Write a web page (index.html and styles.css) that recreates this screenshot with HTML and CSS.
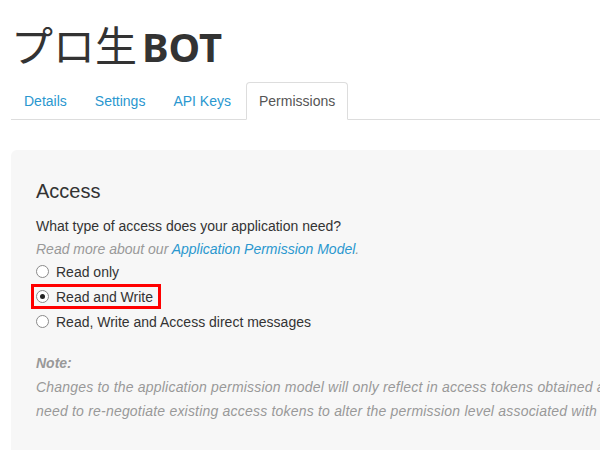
FILE: index.html
```html
<!DOCTYPE html>
<html>
<head>
<meta charset="utf-8">
<link rel="stylesheet" href="styles.css">
</head>
<body>
<div class="page">
  <h1 class="title">プロ生<span class="title-bold">BOT</span></h1>
  <ul class="tabs">
    <li class="tab"><a href="#">Details</a></li>
    <li class="tab"><a href="#">Settings</a></li>
    <li class="tab"><a href="#">API Keys</a></li>
    <li class="tab active"><a href="#">Permissions</a></li>
  </ul>
  <div class="panel">
    <h2 class="heading">Access</h2>
    <p class="question">What type of access does your application need?</p>
    <p class="hint">Read more about our <a href="#">Application Permission Model</a>.</p>
    <label class="option"><input type="radio" name="access"> Read only</label>
    <label class="option selected"><input type="radio" name="access" checked> Read and Write</label>
    <label class="option"><input type="radio" name="access"> Read, Write and Access direct messages</label>
    <p class="note-title">Note:</p>
    <p class="note">Changes to the application permission model will only reflect in access tokens obtained after the permission model change is saved. You will<br>need to re-negotiate existing access tokens to alter the permission level associated with each of your application's users.</p>
  </div>
</div>
</body>
</html>
```
FILE: styles.css
```css
html, body {
  margin: 0;
  padding: 0;
  background: #fff;
  overflow: hidden;
}
body {
  font-family: "Liberation Sans", Arial, sans-serif;
  font-size: 14px;
  line-height: 20px;
  color: #333;
}
.page {
  padding-left: 11px;
  width: 700px;
}
.title {
  margin: 0;
  padding-top: 22px;
  height: 60px;
  box-sizing: border-box;
  font-family: "Noto Sans CJK JP", "Liberation Sans", sans-serif;
  font-weight: 400;
  font-size: 42px;
  line-height: 44px;
  color: #333;
  white-space: nowrap;
}
.title-bold {
  font-family: "Noto Sans", "Liberation Sans", sans-serif;
  font-weight: 700;
  font-size: 40px;
  margin-left: 5px;
}
.tabs {
  list-style: none;
  margin: 22px 0 0 0;
  padding: 0;
  display: flex;
  border-bottom: 1px solid #ddd;
}
.tab {
  margin-right: 2px;
  margin-bottom: -1px;
}
.tab a {
  display: block;
  padding: 8px 12px;
  border: 1px solid transparent;
  border-radius: 4px 4px 0 0;
  color: #2a97cf;
  text-decoration: none;
}
.tab.active a {
  color: #555;
  background: #fff;
  border-color: #ddd #ddd #fff;
}
.panel {
  margin-top: 30px;
  background: #f7f7f7;
  border-radius: 6px 0 0 0;
  padding: 29px 25px 40px;
  height: 300px;
}
.heading {
  margin: 0 0 11px;
  font-size: 20px;
  font-weight: 400;
  line-height: 24px;
  color: #333;
}
.question {
  margin: 0;
  line-height: 25px;
}
.hint {
  margin: 0;
  line-height: 20px;
  font-style: italic;
  color: #999;
}
.hint a {
  color: #2a97cf;
  text-decoration: none;
}
.option {
  display: flex;
  align-items: center;
  width: max-content;
  height: 19px;
  margin-left: -5px;
  padding: 0 5px 0 2px;
  border: 3px solid transparent;
}
.option input {
  appearance: none;
  -webkit-appearance: none;
  margin: 0 7px 0 0;
  width: 13px;
  height: 13px;
  box-sizing: border-box;
  border: 1px solid #8a8a8a;
  border-radius: 50%;
  background: #fff;
  display: flex;
  align-items: center;
  justify-content: center;
}
.option input:checked::after {
  content: "";
  width: 5px;
  height: 5px;
  border-radius: 50%;
  background: #222;
}
.option.selected {
  border-color: #f00;
}
.note-title {
  margin: 17px 0 0;
  font-weight: 700;
  font-style: italic;
  color: #999;
  line-height: 24px;
}
.note {
  margin: 0;
  font-style: italic;
  color: #999;
  line-height: 24px;
  letter-spacing: 0.2px;
  white-space: nowrap;
}
```
